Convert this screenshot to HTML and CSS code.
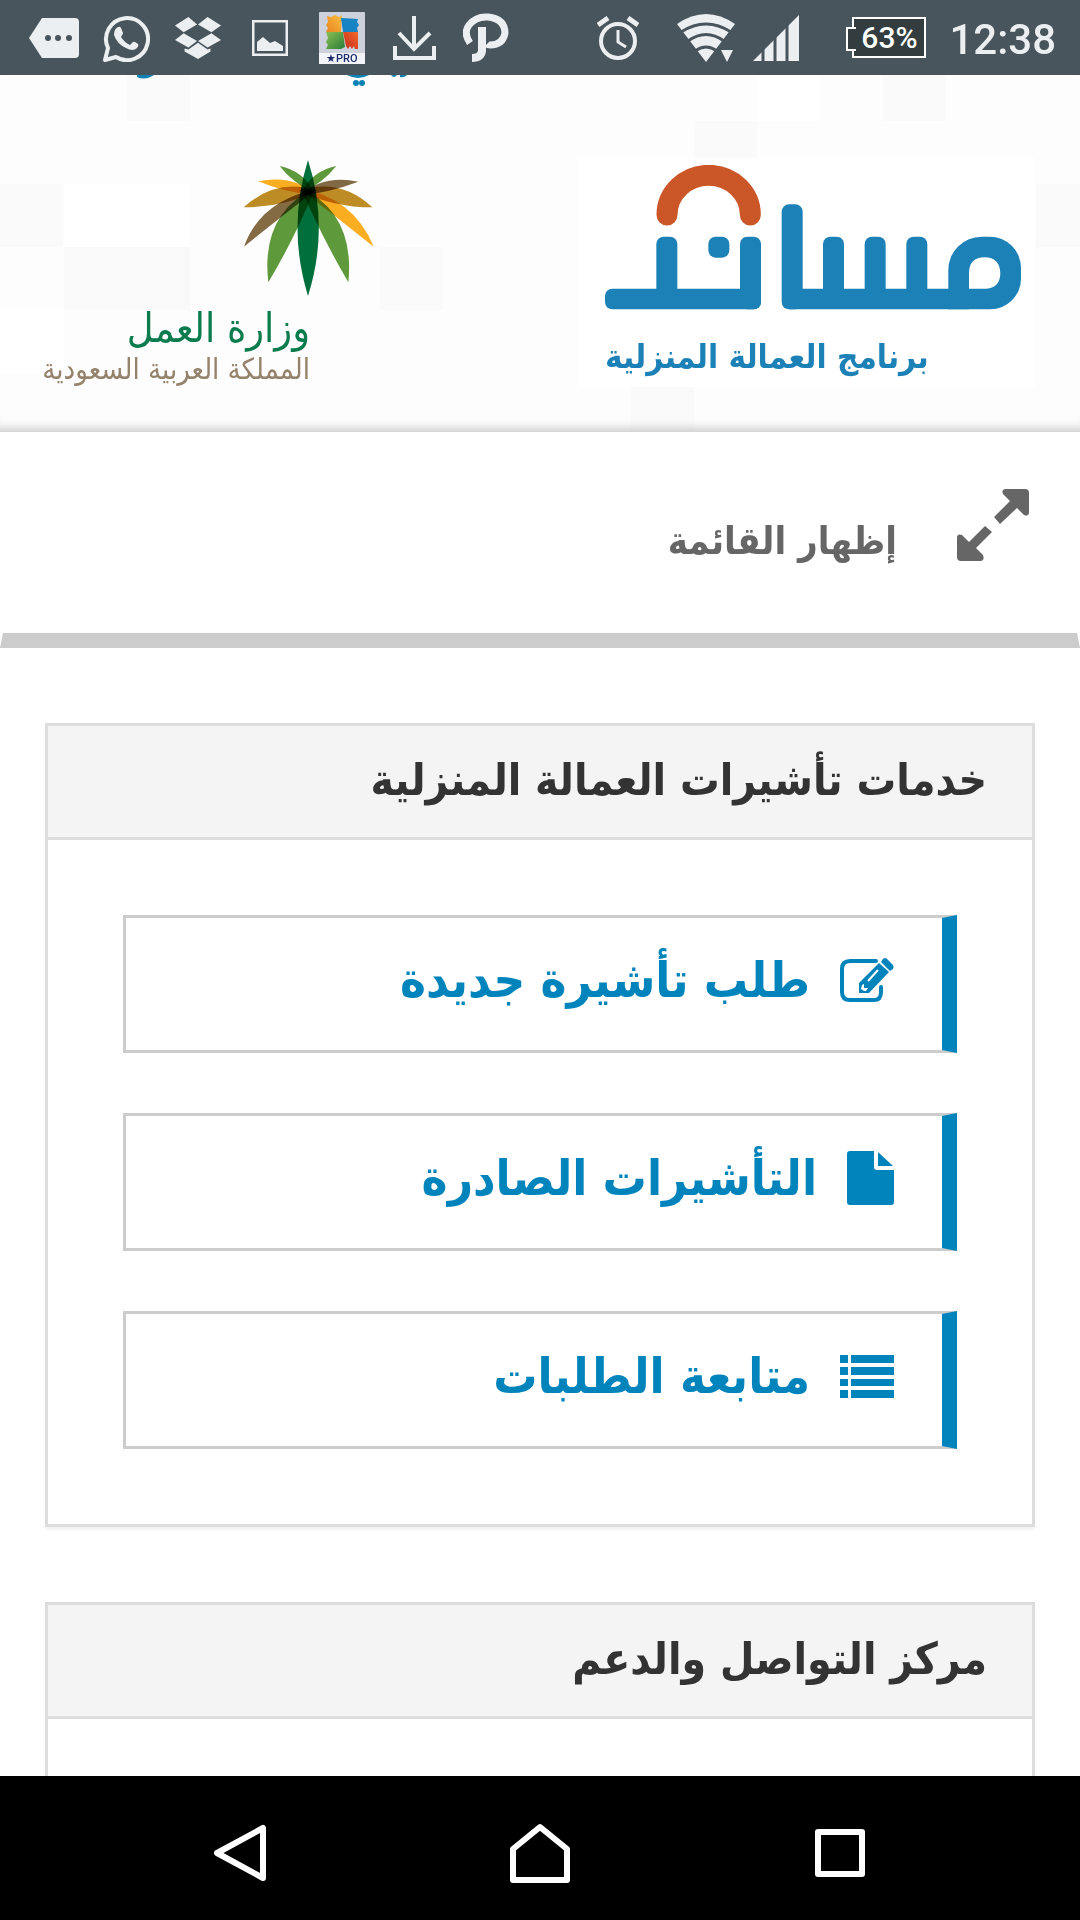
FILE: index.html
```html
<!DOCTYPE html>
<html lang="ar" dir="rtl">
<head>
  <meta charset="UTF-8" />
  <meta name="viewport" content="width=device-width, initial-scale=1.0"/>
  <title>مساند</title>
  <link rel="stylesheet" href="styles.css">
</head>
<body>
  <div class="status-bar" dir="ltr">
    <div class="status-left">
      <svg width="50" height="40" viewBox="0 0 50 40"><path d="M13 0H46Q50 0 50 4V36Q50 40 46 40H13L0 20Z" fill="#eceff1"/><g fill="#48555c"><circle cx="19" cy="20" r="3"/><circle cx="29" cy="20" r="3"/><circle cx="40" cy="20" r="3"/></g></svg>
      <svg width="48" height="48" viewBox="0 0 48 48"><path d="M3 46L6 34A21 21 0 1 1 14 43Z" fill="none" stroke="#eceff1" stroke-width="4" stroke-linejoin="round"/><path d="M16 13Q18 12 19 14L21 19Q21 20 19 23Q22 28 28 31L31 28Q32 27 36 30Q37 31 35 34Q31 38 24 34Q15 30 12 21Q12 15 16 13Z" fill="#eceff1"/></svg>
      <svg width="46" height="44" viewBox="0 0 48 44"><g fill="#eceff1"><path d="M14 0L23 8L9 16L0 9Z"/><path d="M34 0L48 9L38 16L24 8Z"/><path d="M9 17L23 25L14 32L0 24Z"/><path d="M38 17L48 24L34 32L24 25Z"/><path d="M24 27L34 34L37 33V36L24 44L10 36V33L14 34Z"/></g></svg>
      <svg width="36" height="36" viewBox="0 0 36 36"><rect x="1" y="1" width="34" height="34" fill="none" stroke="#eceff1" stroke-width="3"/><path d="M5 31V22L11 17L18 23L23 21L31 26V31Z" fill="#eceff1"/></svg>
      <svg width="46" height="52" viewBox="0 0 46 52">
        <defs>
          <linearGradient id="orange" x1="0" y1="1" x2="1" y2="0"><stop offset="0" stop-color="#e8851c"/><stop offset="1" stop-color="#f9bd45"/></linearGradient>
          <linearGradient id="red" x1="0" y1="1" x2="1" y2="0"><stop offset="0" stop-color="#c5281c"/><stop offset="1" stop-color="#f26a2a"/></linearGradient>
          <linearGradient id="green" x1="0" y1="0" x2="1" y2="1"><stop offset="0" stop-color="#8cc152"/><stop offset="1" stop-color="#2a7c3a"/></linearGradient>
        </defs>
        <rect width="46" height="52" rx="1" fill="#cdd1dc"/><rect y="41" width="46" height="11" fill="#f2f4fa"/>
        <path d="M8 4L12 5L16 3L20 5L23 3L22 20H7L9 16L7 13L9 10Z" fill="url(#orange)"/><path d="M22 6L39 7L38 10L40 13L38 16L39 20H24Z" fill="#1583c4"/><path d="M24 20H39V37H36L35 34L33 37L31 34L29 37L27 34Z" fill="url(#red)"/><path d="M7 20H24L26 35L22 37H7L9 33L7 30L9 26Z" fill="url(#green)"/>
        <text x="7" y="50" class="pro-label">★PRO</text>
      </svg>
      <svg width="43" height="44" viewBox="0 0 43 44"><path d="M21 0V32M6 17L21 33L37 17M2 30V42H41V30" fill="none" stroke="#eceff1" stroke-width="4"/></svg>
      <svg width="46" height="50" viewBox="0 0 46 50"><path d="M7 30Q0 20 6 12Q13 3 25 4Q42 6 42 20Q40 32 27 32Q25 32 24 31" fill="none" stroke="#eceff1" stroke-width="7"/><path d="M19 14V38Q18 45 9 45" fill="none" stroke="#eceff1" stroke-width="8"/></svg>
    </div>
    <div class="status-right">
      <svg width="42" height="44" viewBox="0 0 42 44"><circle cx="21" cy="25" r="17" fill="none" stroke="#eceff1" stroke-width="4"/><path d="M21 14V26L29 31" fill="none" stroke="#eceff1" stroke-width="3"/><path d="M1 9L11 2M31 2L41 9" stroke="#eceff1" stroke-width="5"/></svg>
      <svg class="wifi" width="60" height="48" viewBox="0 0 60 48"><path d="M29 48L0 10Q29 -10 58 10Z" fill="#eceff1"/><path d="M4 18Q29 2 54 18M11 27Q29 14 47 27M18 37Q29 29 40 37" fill="none" stroke="#48555c" stroke-width="3"/><path d="M40 34H60V48H47Z" fill="#48555c"/><path d="M44 36H56L50 48Z" fill="#eceff1"/></svg>
      <svg class="signal" width="46" height="46" viewBox="0 0 46 46"><path d="M0 46L46 0V46Z" fill="#eceff1"/><path d="M10 0V46M22 0V46M34 0V46" stroke="#48555c" stroke-width="3"/></svg>
      <div class="battery">63%</div>
      <div class="clock">12:38</div>
    </div>
  </div>

  <div class="page">
    <header class="site-header">
      <svg class="scrolled-links" width="272" height="12" viewBox="0 0 272 12" fill="#0f82b5" aria-hidden="true"><path d="M0 0H17Q8 6 0 2Z"/><path d="M210 0H232Q221 6 210 0Z"/><circle cx="219" cy="8" r="3"/><circle cx="225" cy="8" r="3"/><path d="M254 0H260Q257 4 254 0Z"/><path d="M263 0H270Q267 3 263 2Z"/></svg>
      <div class="logos">
        <div class="logo-musaned">
          <svg viewBox="136 104 1248 434" role="img" aria-label="مساند">
            <path d="M322 254A125 119 0 0 1 572 254" fill="none" stroke="#cb5728" stroke-width="63" stroke-linecap="round"/>
            <g fill="#1b81b6">
              <rect x="136" y="475" width="468" height="62" rx="22"/>
              <rect x="290" y="319" width="63" height="200" rx="22"/>
              <rect x="446" y="319" width="63" height="63" rx="22"/>
              <rect x="541" y="319" width="63" height="218" rx="22"/>
              <rect x="666" y="222" width="63" height="315" rx="22"/>
              <path d="M688 475H1227V537H688Z"/>
              <rect x="790" y="319" width="63" height="200" rx="22"/>
              <rect x="915" y="319" width="63" height="200" rx="22"/>
              <rect x="1040" y="319" width="63" height="200" rx="22"/>
              <path fill-rule="evenodd" d="M1166 537V419A100 100 0 0 1 1266 319H1290A94 94 0 0 1 1384 413V445A92 92 0 0 1 1292 537ZM1228 475H1280Q1322 472 1322 428Q1320 382 1275 381Q1228 382 1228 428Z"/>
            </g>
          </svg>
          <p>برنامج العمالة المنزلية</p>
        </div>
        <div class="logo-ministry">
          <svg class="palm" viewBox="728 88 396 408" aria-hidden="true">
            <path d="M945 190Q875 155 838 106Q910 120 945 190Z" fill="#5f9a3c"/>
            <path d="M900 190Q970 155 1008 106Q935 120 900 190Z" fill="#5f9a3c"/>
            <path d="M950 195Q850 185 774 152Q880 130 950 195Z" fill="#fbb022"/>
            <path d="M895 195Q990 185 1074 153Q970 130 895 195Z" fill="#836a45"/>
            <path d="M950 180Q850 230 730 230Q830 140 950 180Z" fill="#c08d24"/>
            <path d="M895 180Q1000 230 1116 230Q1020 140 895 180Z" fill="#c08d24"/>
            <path d="M950 175Q840 260 731 348Q780 210 950 175Z" fill="#866c44"/>
            <path d="M895 172Q1010 260 1120 348Q1060 200 895 172Z" fill="#fbb022"/>
            <path d="M945 170Q890 310 804 455Q780 250 945 170Z" fill="#5f9a3c"/>
            <path d="M900 170Q960 310 1044 455Q1065 250 900 170Z" fill="#5f9a3c"/>
            <path d="M923 88Q860 290 923 496Q988 290 923 88Z" fill="#00703c"/>
          </svg>
          <p class="ministry-name">وزارة العمل</p>
          <p class="ministry-country">المملكة العربية السعودية</p>
        </div>
      </div>
    </header>

    <button class="menu-toggle" type="button">
      <svg width="72" height="72" viewBox="0 0 72 72" fill="#666"><path d="M48 0H68Q72 0 72 4V23Q72 28 67 26L60 19L43 35L37 28L53 12L46 5Q44 1 48 0Z"/><path d="M24 72H4Q0 72 0 68V49Q0 44 5 46L12 53L28 37L35 43L19 59L26 66Q28 71 24 72Z"/></svg>
      <span>إظهار القائمة</span>
    </button>

    <main class="content">
      <section class="panel">
        <h2>خدمات تأشيرات العمالة المنزلية</h2>
        <div class="panel-body">
          <a class="service-link" href="#">
            <svg width="54" height="45" viewBox="0 0 54 45"><path d="M36 3H10Q2 3 2 11V34Q2 42 10 42H34Q41 42 41 34V29" fill="none" stroke="#0084bb" stroke-width="4" stroke-linecap="round"/><path d="M19 35V25L39 5L49 14L29 35Z" fill="#0084bb"/><path d="M41 4L43 1Q45 -1 47 1L53 7Q54 9 53 11L50 13Z" fill="#0084bb"/><path d="M22 27L24 26V30H28L26 33H24L21 31Z" fill="#fff"/><path d="M28 23L38 12" stroke="#fff" stroke-width="2"/></svg>
            <span>طلب تأشيرة جديدة</span>
          </a>
          <a class="service-link" href="#">
            <svg width="47" height="54" viewBox="0 0 47 54" fill="#0084bb"><path d="M3 0H27V16Q27 19 30 19H47V51Q47 54 44 54H3Q0 54 0 51V3Q0 0 3 0Z"/><path d="M31 1L46 15H31Z"/></svg>
            <span>التأشيرات الصادرة</span>
          </a>
          <a class="service-link" href="#">
            <svg width="54" height="43" viewBox="0 0 54 43" fill="#0084bb"><path d="M0 0H8V8H0ZM11 0H54V8H11ZM0 12H8V20H0ZM11 12H54V20H11ZM0 24H8V31H0ZM11 24H54V31H11ZM0 35H8V43H0ZM11 35H54V43H11Z"/></svg>
            <span>متابعة الطلبات</span>
          </a>
        </div>
      </section>

      <section class="panel">
        <h2>مركز التواصل والدعم</h2>
        <div class="panel-body"></div>
      </section>
    </main>
  </div>

  <nav class="android-nav" dir="ltr">
    <button type="button" aria-label="Back"><svg width="60" height="60" viewBox="0 0 60 60"><path d="M53 5V55L7 30Z"/></svg></button>
    <button type="button" aria-label="Home"><svg width="60" height="60" viewBox="0 0 60 60"><path d="M3 57V26L30 4L57 26V57Z"/></svg></button>
    <button type="button" aria-label="Recent apps"><svg width="60" height="60" viewBox="0 0 60 60"><rect x="8" y="9" width="44" height="42"/></svg></button>
  </nav>
</body>
</html>
```
FILE: styles.css
```css
* {
  box-sizing: border-box;
}

body {
  margin: 0;
  height: 100vh;
  display: flex;
  flex-direction: column;
  overflow: hidden;
  background: #fff;
  font-family: "DejaVu Sans Condensed", "DejaVu Sans", sans-serif;
}

p, h2 {
  margin: 0;
}

svg {
  flex: none;
}

/* status bar */
.status-bar {
  height: 75px;
  flex: none;
  padding: 0 24px 0 18px;
  display: flex;
  justify-content: space-between;
  align-items: center;
  background: #48555c;
  color: #eceff1;
  font-family: Roboto, sans-serif;
}

.status-left {
  display: grid;
  grid-template-columns: repeat(7, 72px);
  justify-items: center;
  align-items: center;
}

.status-right {
  display: flex;
  align-items: center;
}

.wifi {
  margin-left: 38px;
}

.signal {
  margin-left: 16px;
}

.pro-label {
  font-size: 11px;
  font-weight: 500;
  fill: #1c2b6b;
}

.battery {
  position: relative;
  width: 74px;
  height: 41px;
  margin-left: 53px;
  border: 2px solid #fff;
  background: #333d40;
  color: #fff;
  font-size: 30px;
  font-weight: 500;
  line-height: 37px;
  text-align: center;
}

.battery::before {
  content: "";
  position: absolute;
  left: -8px;
  top: 8px;
  width: 8px;
  height: 20px;
  border: 2px solid #fff;
  border-right: 0;
  background: #333d40;
}

.clock {
  padding-top: 4px;
  margin-left: 23px;
  font-size: 42px;
  font-weight: 500;
}

/* page */
.page {
  flex: 1;
  min-height: 0;
  overflow: hidden;
}

.site-header {
  height: 357px;
  padding: 0 45px;
  background-color: #fdfdfd;
  /* faint mosaic squares */
  background-image:
    linear-gradient(#fafafa, #fafafa),
    linear-gradient(#fafafa, #fafafa),
    linear-gradient(#fafafa, #fafafa),
    linear-gradient(#f9f9f9, #f9f9f9),
    linear-gradient(#fafafa, #fafafa),
    linear-gradient(#fafafa, #fafafa),
    linear-gradient(#fafafa, #fafafa),
    linear-gradient(#fafafa, #fafafa),
    linear-gradient(#fff, #fff),
    linear-gradient(#fff, #fff),
    linear-gradient(#fff, #fff);
  background-size: 63px 46px, 63px 46px, 63px 63px, 126px 63px, 63px 63px, 63px 63px, 44px 63px, 63px 63px, 126px 63px, 63px 63px, 63px 46px;
  background-position: 127px 0, 883px 0, 0 109px, 64px 172px, 380px 172px, 694px 46px, 1036px 109px, 631px 299px, 64px 109px, 0 235px, 757px 0;
  background-repeat: no-repeat;
  box-shadow: inset 0 -12px 10px -8px #ccc;
}

.scrolled-links {
  display: block;
  margin-right: auto;
  margin-left: 92px;
}

.logos {
  padding-top: 71px;
  display: flex;
  justify-content: space-between;
}

.logo-musaned {
  width: 457px;
  height: 229px;
  padding: 7px 14px 0 27px;
  background: #fff;
}

.logo-musaned svg {
  display: block;
  width: 100%;
}

.logo-musaned p {
  margin-top: 27px;
  text-align: left;
  color: #1b81b6;
  font-size: 33px;
  font-weight: bold;
}

.logo-ministry {
  width: 330px;
  padding-top: 2px;
  padding-right: 65px;
}

.palm {
  display: block;
  width: 132px;
  margin-right: -65px;
}

.palm path {
  mix-blend-mode: multiply;
}

.ministry-name {
  margin-top: 10px;
  color: #0c7c4f;
  font-size: 41px;
  line-height: 44px;
}

.ministry-country {
  color: #94826a;
  font-size: 29px;
  line-height: 38px;
  white-space: nowrap;
}

.menu-toggle {
  display: flex;
  width: 100%;
  height: 216px;
  gap: 60px;
  padding: 57px 48px 0;
  border: 3px solid transparent;
  border-top: 0;
  border-bottom: 15px solid #ccc;
  background: #fff;
  color: #666;
  font-family: inherit;
  font-size: 38px;
  font-weight: bold;
  line-height: 104px;
}

.content {
  padding: 75px 45px;
  display: flex;
  flex-direction: column;
  gap: 75px;
}

.panel {
  border: 3px solid #ddd;
  box-shadow: 0 3px 3px rgba(0, 0, 0, 0.05);
}

.panel h2 {
  height: 114px;
  padding: 0 45px;
  border-bottom: 3px solid #ddd;
  background: #f4f4f4;
  color: #333;
  font-size: 44px;
  line-height: 108px;
}

.panel-body {
  min-height: 150px;
  padding: 75px;
  display: flex;
  flex-direction: column;
  gap: 60px;
}

.service-link {
  height: 138px;
  padding: 0 48px 8px;
  display: flex;
  align-items: center;
  gap: 30px;
  border: 3px solid #ccc;
  border-right: 15px solid #0084bb;
  color: #0084bb;
  font-size: 49px;
  font-weight: bold;
  text-decoration: none;
}

/* system buttons */
.android-nav {
  height: 144px;
  flex: none;
  padding: 10px 210px 0;
  display: flex;
  justify-content: space-between;
  align-items: center;
  background: #000;
}

.android-nav button {
  height: 60px;
  padding: 0;
  border: 0;
  background: none;
}

.android-nav svg {
  fill: none;
  stroke: #fff;
  stroke-width: 6px;
  stroke-linejoin: round;
}
```
